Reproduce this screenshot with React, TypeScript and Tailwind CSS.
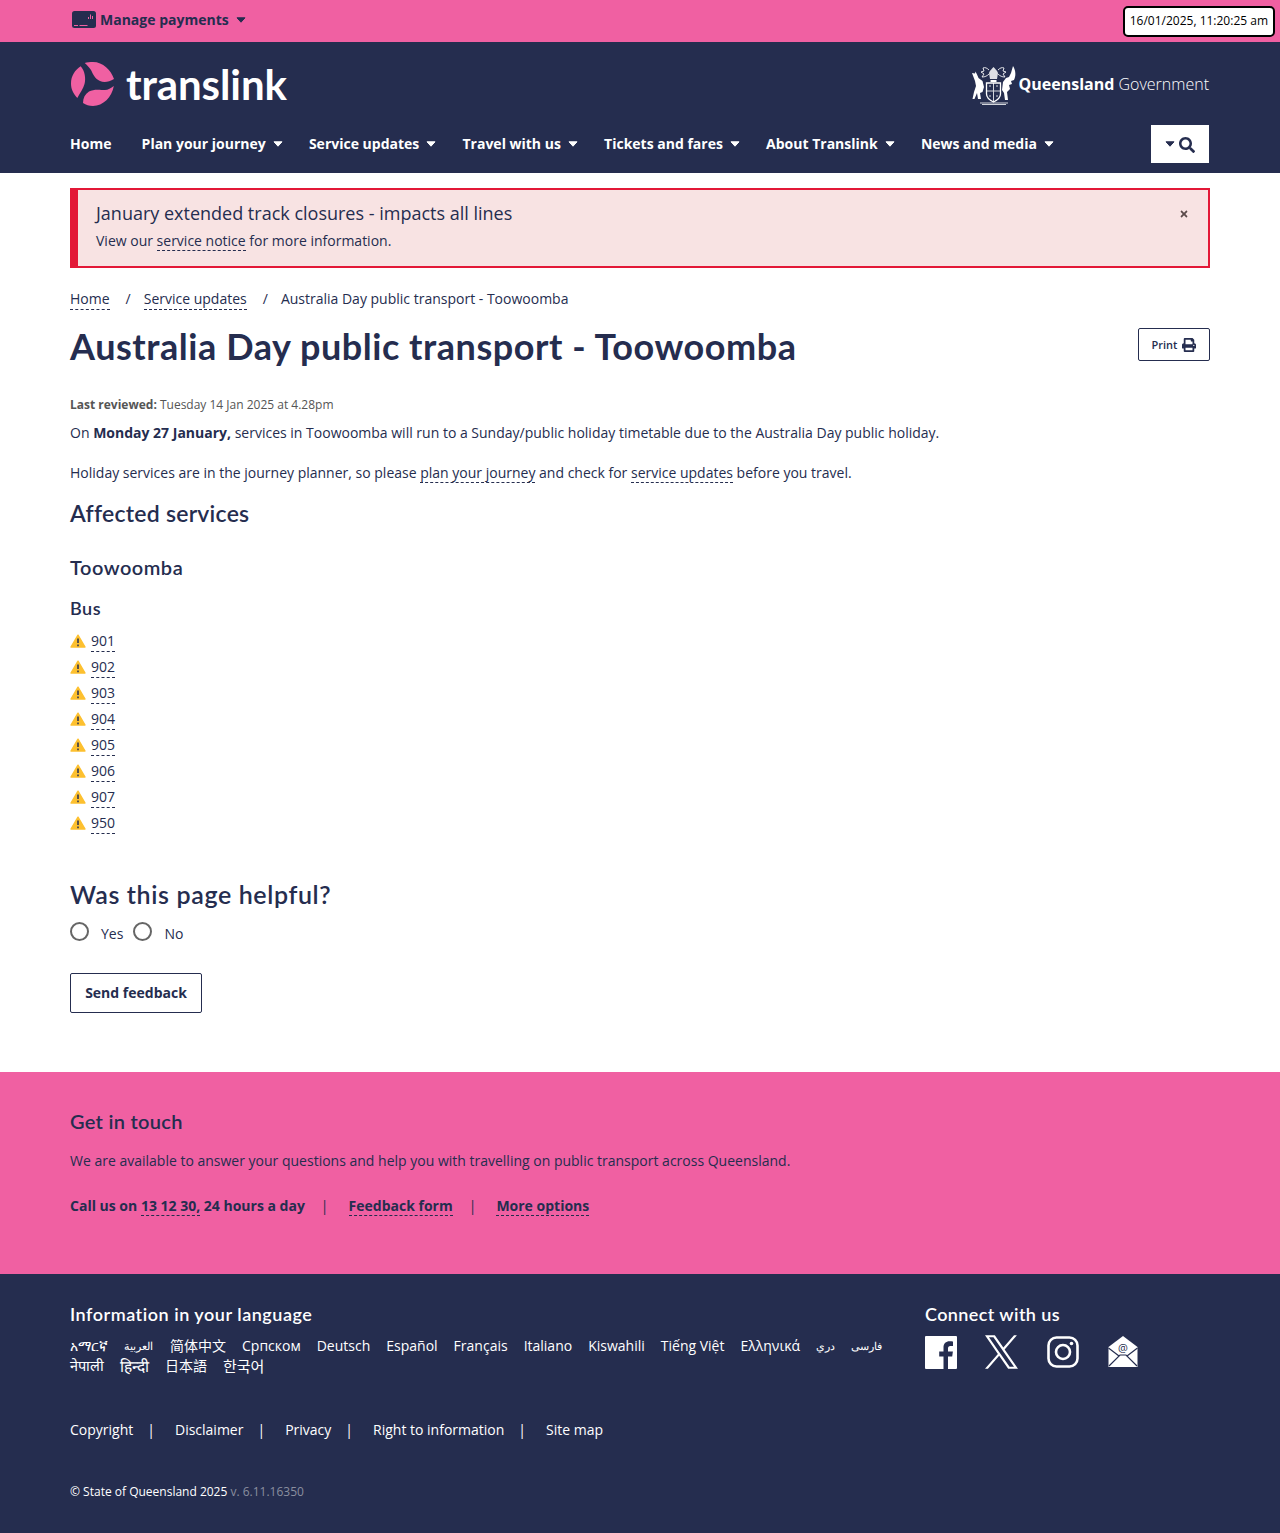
import { FaSearch, FaPrint, FaTimes } from "react-icons/fa";

const navy = "text-[#252d4f]";

const navItems = ["Plan your journey", "Service updates", "Travel with us", "Tickets and fares", "About Translink", "News and media"];
const routes = ["901", "902", "903", "904", "905", "906", "907", "950"];
const languages = [
  { name: "አማርኛ", cls: "text-sm" },
  { name: "العربية", cls: "text-[11px] pr-[1px]" },
  { name: "简体中文", cls: "text-sm" },
  { name: "Српском", cls: "text-sm" },
  { name: "Deutsch", cls: "text-sm" },
  { name: "Español", cls: "text-sm" },
  { name: "Français", cls: "text-sm" },
  { name: "Italiano", cls: "text-sm" },
  { name: "Kiswahili", cls: "text-sm" },
  { name: "Tiếng Việt", cls: "text-sm" },
  { name: "Ελληνικά", cls: "text-sm" },
  { name: "دري", cls: "text-[11px]" },
  { name: "فارسی", cls: "text-[11px]" },
  { name: "नेपाली", cls: "text-[14.5px]" },
  { name: "हिन्दी", cls: "text-[15.5px]" },
  { name: "日本語", cls: "text-sm" },
  { name: "한국어", cls: "text-[15px]" },
];
const footerLinks = ["Copyright", "Disclaimer", "Privacy", "Right to information"];

const Dashed = ({ children }: { children: React.ReactNode }) => (
  <a className="border-b border-dashed border-[#252d4f]">{children}</a>
);

// caret used all over the nav
const Caret = ({ className = "" }: { className?: string }) => (
  <svg width="10" height="6" viewBox="0 0 10 6" className={className} fill="currentColor" stroke="currentColor" strokeWidth="1" strokeLinejoin="round">
    <path d="M1 .8h8L5 5.2z" />
  </svg>
);

const Logo = () => (
  <svg width="44" height="44" viewBox="0 0 44 44" fill="#f060a2">
    <path d="M9.700 4.300C14 9 15 17 13.500 22C12.500 26 9 31 6.300 36C2 31 0 27 0 21.500C0 14 4 8 9.700 4.300Z" />
    <path d="M13.700 1C16 .3 19 0 22 0C32 0 40 8 43 17C38 20 33 21 29 19C24 17 22 12 20 8C18 5 16 3 13.700 1Z" />
    <path d="M42.800 24C41 35 32 44 22 44C18 44 15 43 12 41C12 36 14 32 18 29.500C23 26.500 30 28 34 28C37 28 40 26 42.800 24Z" />
  </svg>
);

const Crest = () => (
  <svg width="44" height="42" viewBox="0 0 44 42" fill="#fff">
    <path d="M14.500 20h14v11c0 4-3 6-7 8-4-2-7-4-7-8z" fill="none" stroke="#fff" strokeWidth="1.300" />
    <path d="M21.500 20v19M14.500 28h14M17 23h2M24 23h2M17 33h2M24 33h2" stroke="#fff" strokeWidth="1" opacity=".8" />
    <path d="M17 10c1-3 3-4 4.500-6 1.500 2 3.500 3 4.500 6l-1 6h-7z" opacity=".85" />
    <path d="M18.500 17h6v2h-6z" />
    <path d="M17 7c-2-2-4-3-6-2l1 3-3 1 3 2-2 3c3 0 5-1 7-3M26 7c2-2 4-3 6-2l-1 3 3 1-3 2 2 3c-3 0-5-1-7-3" fill="none" stroke="#fff" strokeWidth="1" opacity=".85" />
    <path d="M0 10l3 .5 .5-2 1.500 3 1.500 3.500 4 3 1.500 6-1.500 5-2.500 1 1 6H6l-1-6-2.500 6H.5l1.500-7 2-6-1-5z" />
    <path d="M41 3c3 5 3 10 1 14l-3 1 1 3-3 1 1 4-3 3 1 8h-3l-1-7-2-3 1-8 3-4 3-1 2-4z" />
    <path d="M8 39.500h28v1H8zM10 41h24v1H10z" opacity=".8" />
  </svg>
);

const PaymentIcon = () => (
  <svg width="24" height="17" viewBox="0 0 24 17" className="-mt-[1px]">
    <rect width="24" height="17" rx="2.500" fill="#252d4f" />
    <path d="M2 14.500h4M7.500 14.500h8" stroke="#f060a2" strokeWidth="1" />
    <path d="M16.500 8v-2M18.500 8V3.500M20.500 8V5" stroke="#f060a2" strokeWidth="1" />
  </svg>
);

const Warning = () => (
  <svg width="16" height="14" viewBox="0 0 16 14">
    <path d="M8 1.200 L15 13 H1Z" fill="#fdc02f" stroke="#fdc02f" strokeWidth="1.400" strokeLinejoin="round" />
    <path d="M8 4.500v4.500M8 10.500v1.700" stroke="#252d4f" strokeWidth="1.500" />
  </svg>
);

const Facebook = () => (
  <svg width="32" height="33" viewBox="0 0 32 33">
    <path fillRule="evenodd" fill="#fff" d="M1 0h30a1 1 0 0 1 1 1v31a1 1 0 0 1-1 1H23V20.500h4.200l.7-5H23v-3c0-1.500.5-2.500 2.500-2.500H28V5.500c-.6-.1-2-.2-3.500-.2-3.500 0-6 2.100-6 6.200v4h-4.300v5h4.300V33H1a1 1 0 0 1-1-1V1a1 1 0 0 1 1-1z" />
  </svg>
);

const XLogo = () => (
  <svg width="33" height="34" viewBox="0 0 1200 1227" fill="#fff">
    <path d="M714.163 519.284L1160.89 0H1055.03L667.137 450.887L357.328 0H0L468.492 681.821L0 1226.37H105.866L515.491 750.218L842.672 1226.37H1200L714.137 519.284H714.163ZM569.165 687.828L521.697 619.934L144.011 79.6944H306.615L611.412 515.685L658.88 583.579L1055.08 1150.3H892.476L569.165 687.854V687.828Z" />
  </svg>
);

const Instagram = () => (
  <svg width="32" height="32" viewBox="0 0 32 32" fill="none" stroke="#fff" strokeWidth="2.600">
    <rect x="1.500" y="1.500" width="29" height="29" rx="8" />
    <circle cx="16" cy="16" r="7" />
    <circle cx="24.500" cy="7.500" r="1.800" fill="#fff" stroke="none" />
  </svg>
);

const MailIcon = () => (
  <svg width="30" height="32" viewBox="0 0 30 32">
    <path d="M15 0 L29.500 11 V31 H.5 V11Z" fill="#fff" />
    <path d="M1 30 L12 19 H18 L29 30 M.5 12 L11 20 M29.500 12 L19 20" fill="none" stroke="#252d4f" strokeWidth="1.200" />
    <text x="15" y="15.500" textAnchor="middle" fontSize="11" fill="#252d4f" fontFamily="'Open Sans', sans-serif">@</text>
  </svg>
);

export default function App() {
  return (
    <div className={`font-['Open_Sans',sans-serif] text-sm ${navy} bg-white`}>
      <div className="bg-[#f060a2] h-[42px] flex items-center justify-between pl-[72px] pr-[5px]">
        <div className="flex items-center gap-[4px] font-bold text-sm pb-[2px]">
          <PaymentIcon />
          <span>Manage payments</span>
          <Caret className="ml-[3px]" />
        </div>
        <div className="bg-white border-2 border-black rounded-[5px] h-[31px] px-[5px] flex items-center text-xs text-black">16/01/2025, 11:20:25 am</div>
      </div>

      <header className="bg-[#252d4f] h-[131px] px-[70px] text-white">
        <div className="flex items-center justify-between pt-[21px] pb-[20px] h-[83px]">
          <div className="flex items-center gap-[11px] ml-[1px]">
            <Logo />
            <span className="font-['Lato',sans-serif] font-bold text-[42px] leading-none tracking-[-0.1px]">translink</span>
          </div>
          <div className="flex items-center gap-[3px] mr-[1px]">
            <Crest />
            <span className="text-base"><span className="font-bold">Queensland</span> <span className="font-light">Government</span></span>
          </div>
        </div>
        <nav className="flex items-center justify-between mr-[1px]">
          <div className="flex items-center gap-[26.2px] font-bold text-sm">
            <span className="mr-[4px]">Home</span>
            {navItems.map((item) => (
              <span key={item} className="flex items-center gap-[7px]">
                {item}
                <Caret />
              </span>
            ))}
          </div>
          <div className={`bg-white w-[58px] h-[38px] flex items-center justify-center ${navy}`}>
            <Caret />
            <FaSearch className="w-[16px] h-[16px] ml-[4px] mt-[2px]" />
          </div>
        </nav>
      </header>

      <main className="px-[70px]">
        <div className="mt-[15px] h-[80px] bg-[#f8e3e3] border-2 border-l-8 border-[#e31837] pl-[18px] pr-[19px] pt-[11px] flex justify-between items-start">
          <div>
            <div className="text-lg leading-[24px]">January extended track closures - impacts all lines</div>
            <div className="mt-[6px] text-sm leading-[20px]">View our <Dashed>service notice</Dashed> for more information.</div>
          </div>
          <FaTimes className="w-[10px] h-[10px] mt-[8px] text-[#5a4a4a]" />
        </div>

        <div className="mt-[21px] flex leading-[20px]">
          <Dashed>Home</Dashed>
          <span className="ml-[16px] mr-[13px]">/</span>
          <Dashed>Service updates</Dashed>
          <span className="ml-[16px] mr-[13px]">/</span>
          <span>Australia Day public transport - Toowoomba</span>
        </div>

        <div className="mt-[9px] flex justify-between items-start">
          <h1 className="font-['Lato',sans-serif] font-bold text-[36px] leading-[54px] tracking-[0.55px]">Australia Day public transport - Toowoomba</h1>
          <div className="mt-[9px] border border-[#252d4f] rounded-[2px] w-[72px] h-[33px] flex items-center justify-center gap-[5px] text-[11px] font-semibold">
            Print <FaPrint className="w-[14px] h-[14px]" />
          </div>
        </div>

        <p className="mt-[23px] text-xs leading-[18px] text-[#555]"><b>Last reviewed:</b> Tuesday 14 Jan 2025 at 4.28pm</p>
        <p className="mt-[9px] leading-[20px]">On <b>Monday 27 January,</b> services in Toowoomba will run to a Sunday/public holiday timetable due to the Australia Day public holiday.</p>
        <p className="mt-[20px] leading-[20px]">Holiday services are in the journey planner, so please <Dashed>plan your journey</Dashed> and check for <Dashed>service updates</Dashed> before you travel.</p>

        <h2 className="mt-[15px] font-['Lato',sans-serif] font-semibold text-[23px] leading-[30px] tracking-[0.24px]">Affected services</h2>
        <h3 className="mt-[26px] font-['Lato',sans-serif] font-semibold text-[20px] leading-[26px] tracking-[0.5px]">Toowoomba</h3>
        <h4 className="mt-[16px] font-['Lato',sans-serif] font-semibold text-[18px] leading-[24px] tracking-[0.5px]">Bus</h4>

        <ul className="mt-[8px]">
          {routes.map((r) => (
            <li key={r} className="h-[26px] flex items-center gap-[5px]">
              <Warning />
              <Dashed>{r}</Dashed>
            </li>
          ))}
        </ul>

        <h2 className="mt-[42px] font-['Lato',sans-serif] font-semibold text-[25px] leading-[32px] tracking-[0.63px]">Was this page helpful?</h2>
        <div className="mt-[10px] flex items-center h-[24px]">
          <span className="w-[19px] h-[19px] rounded-full border-2 border-[#666] mr-[12px] -mt-[1px]" />
          <span className="mr-[10px] mt-[3px]">Yes</span>
          <span className="w-[19px] h-[19px] rounded-full border-2 border-[#666] mr-[12px] -mt-[1px]" />
          <span className="mt-[3px]">No</span>
        </div>
        <button className="mt-[29px] block w-[132px] h-[40px] border border-[#252d4f] rounded-[2px] font-bold text-sm">Send feedback</button>
      </main>

      <section className="mt-[59px] bg-[#f060a2] h-[202px] px-[70px] pt-[35px]">
        <h2 className="font-['Lato',sans-serif] font-semibold text-[20px] leading-[28px] tracking-[0.3px]">Get in touch</h2>
        <p className="mt-[16px] leading-[20px]">We are available to answer your questions and help you with travelling on public transport across Queensland.</p>
        <div className="mt-[25px] font-bold leading-[20px]">
          <span>Call us on <Dashed>13 12 30,</Dashed> 24 hours a day</span>
          <span className="ml-[16px] mr-[20px] font-normal">|</span>
          <Dashed>Feedback form</Dashed>
          <span className="ml-[16px] mr-[20px] font-normal">|</span>
          <Dashed>More options</Dashed>
        </div>
      </section>

      <footer className="bg-[#252d4f] h-[259px] px-[70px] pt-[28px] text-white">
        <div className="flex">
          <div className="w-[855px]">
            <h2 className="font-['Lato',sans-serif] font-semibold text-[18px] leading-[24px] tracking-[0.53px]">Information in your language</h2>
            <div className="mt-[10px] flex flex-wrap items-center gap-x-[16px] w-[830px] font-['Open_Sans','Noto_Sans_CJK_SC',sans-serif]">
              {languages.map((l) => (
                <span key={l.name} className={`${l.cls} leading-[20px]`}>{l.name}</span>
              ))}
            </div>
          </div>
          <div>
            <h2 className="font-['Lato',sans-serif] font-semibold text-[18px] leading-[24px] tracking-[0.4px]">Connect with us</h2>
            <div className="mt-[9px] flex items-center">
              <Facebook />
              <span className="ml-[28px]"><XLogo /></span>
              <span className="ml-[29px]"><Instagram /></span>
              <span className="ml-[29px]"><MailIcon /></span>
            </div>
          </div>
        </div>
        <div className="mt-[44px] flex items-center leading-[20px]">
          {footerLinks.map((l) => (
            <span key={l} className="flex">
              <span>{l}</span>
              <span className="ml-[14px] mr-[20px]">|</span>
            </span>
          ))}
          <span>Site map</span>
        </div>
        <div className="mt-[42px] text-xs leading-[20px]">© State of Queensland 2025 <span className="text-[#8a8f9f]">v. 6.11.16350</span></div>
      </footer>
    </div>
  );
}
